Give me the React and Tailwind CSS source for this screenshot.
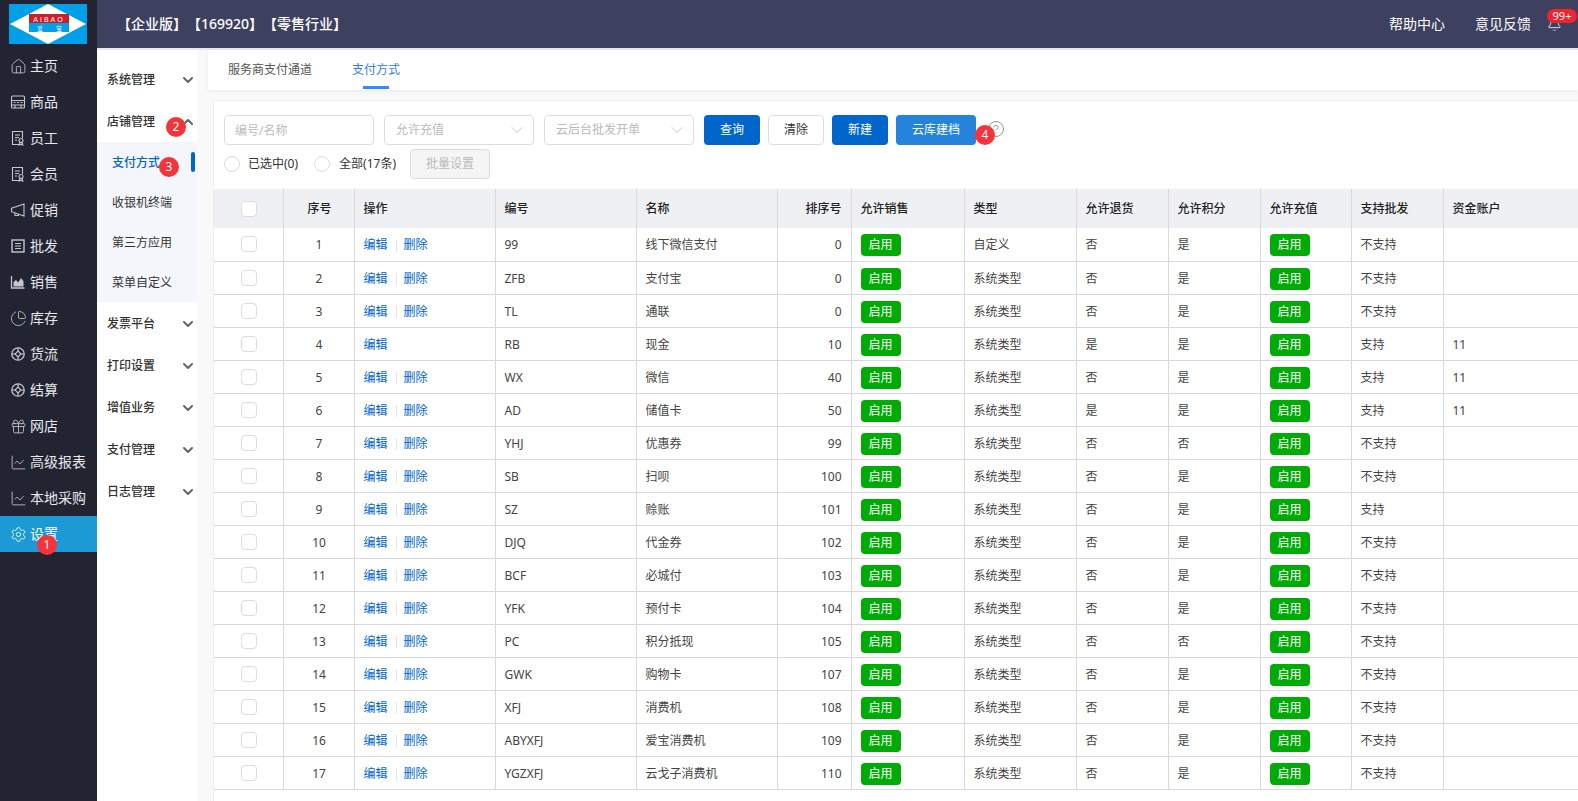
import { Bell, ChartLine, ChartPie, ChevronDown, ChevronUp, CircleHelp, Gift, House, Settings } from "lucide-react";

// icons the package has no close match for
function Svg({ children }) {
  return (
    <svg width="16" height="16" viewBox="0 0 16 16" fill="none" stroke="currentColor" strokeWidth="1.1">
      {children}
    </svg>
  );
}

const ShopIcon = () => (
  <Svg>
    <rect x="1.5" y="2" width="13" height="12" rx="1" />
    <path d="M1.5 6.5h13M1.5 11h13" />
    <path d="M3.5 8.5h2M7 8.5h2M10.5 8.5h2M5 11v3M11 11v3" />
  </Svg>
);
const DocIcon = () => (
  <Svg>
    <path d="M9 14.5H2.5v-13h10V8" />
    <path d="M5 5h5M5 7.5h4M5 10h2" />
    <circle cx="11" cy="10.5" r="2" />
    <path d="M9.8 12.5l-.6 2.5 1.8-.8 1.8.8-.6-2.5" />
  </Svg>
);
const HornIcon = () => (
  <Svg>
    <path d="M1.5 6.3L14 2v12L1.5 9.7z" />
    <path d="M5 11v2.5h3.5v-1.2" />
  </Svg>
);
const ListIcon = () => (
  <Svg>
    <rect x="2" y="2" width="12" height="12" strokeWidth="1.4" />
    <path d="M5 5.5h6M5 8h6M5 10.5h6" />
  </Svg>
);
const AreaIcon = () => (
  <Svg>
    <path d="M1.5 2v12h13" strokeWidth="1.3" />
    <path d="M3.5 12.5V8l2.5-2 2.2 2.5L11 4l2.5 3.2v5.3z" fill="currentColor" stroke="none" />
  </Svg>
);
const FlowIcon = () => (
  <Svg>
    <circle cx="8" cy="8" r="6.2" strokeWidth="1.3" />
    <path d="M8 5l3 3-3 3-3-3z" />
    <path d="M8 1.8V5M8 11v3.2M1.8 8H5M11 8h3.2" />
  </Svg>
);

const lucide = (Icon) => () => <Icon size={17} strokeWidth={1.2} className="shrink-0" />;

const navItems = [
  { label: "主页", icon: lucide(House) },
  { label: "商品", icon: ShopIcon },
  { label: "员工", icon: DocIcon },
  { label: "会员", icon: DocIcon },
  { label: "促销", icon: HornIcon },
  { label: "批发", icon: ListIcon },
  { label: "销售", icon: AreaIcon },
  { label: "库存", icon: lucide(ChartPie) },
  { label: "货流", icon: FlowIcon },
  { label: "结算", icon: FlowIcon },
  { label: "网店", icon: lucide(Gift) },
  { label: "高级报表", icon: lucide(ChartLine) },
  { label: "本地采购", icon: lucide(ChartLine) },
  { label: "设置", icon: lucide(Settings), active: true },
];

const subItems = ["支付方式", "收银机终端", "第三方应用", "菜单自定义"];
const lowerGroups = ["发票平台", "打印设置", "增值业务", "支付管理", "日志管理"];

// [code, name, sort, type, refund, points, wholesale, account, canDelete]
const rows = [
  ["99", "线下微信支付", 0, "自定义", "否", "是", "不支持", "", true],
  ["ZFB", "支付宝", 0, "系统类型", "否", "是", "不支持", "", true],
  ["TL", "通联", 0, "系统类型", "否", "是", "不支持", "", true],
  ["RB", "现金", 10, "系统类型", "是", "是", "支持", "11", false],
  ["WX", "微信", 40, "系统类型", "否", "是", "支持", "11", true],
  ["AD", "储值卡", 50, "系统类型", "是", "是", "支持", "11", true],
  ["YHJ", "优惠券", 99, "系统类型", "否", "否", "不支持", "", true],
  ["SB", "扫呗", 100, "系统类型", "否", "是", "不支持", "", true],
  ["SZ", "赊账", 101, "系统类型", "否", "是", "支持", "", true],
  ["DJQ", "代金券", 102, "系统类型", "否", "是", "不支持", "", true],
  ["BCF", "必城付", 103, "系统类型", "否", "是", "不支持", "", true],
  ["YFK", "预付卡", 104, "系统类型", "否", "是", "不支持", "", true],
  ["PC", "积分抵现", 105, "系统类型", "否", "否", "不支持", "", true],
  ["GWK", "购物卡", 107, "系统类型", "否", "是", "不支持", "", true],
  ["XFJ", "消费机", 108, "系统类型", "否", "是", "不支持", "", true],
  ["ABYXFJ", "爱宝消费机", 109, "系统类型", "否", "是", "不支持", "", true],
  ["YGZXFJ", "云戈子消费机", 110, "系统类型", "否", "是", "不支持", "", true],
];

function Badge({ n, className }) {
  return (
    <span
      className={`absolute z-10 flex h-5 w-5 items-center justify-center rounded-full bg-[#f5333a] text-xs font-normal text-white ${className}`}
    >
      {n}
    </span>
  );
}

function Logo() {
  return (
    <svg width="78" height="40" viewBox="0 0 78 40" className="block">
      <rect width="78" height="40" fill="#00a0e9" />
      <polygon points="1,20 39,0 77,20 39,40" fill="#fff" />
      <rect x="20" y="10" width="40" height="18" fill="#00a0e9" />
      <rect x="20" y="10" width="40" height="9" fill="#cc1f2a" />
      <text x="40" y="17.5" textAnchor="middle" fontSize="7" letterSpacing="2" fill="#fff" fontFamily="Liberation Sans">
        AIBAO
      </text>
      <text x="31" y="26.5" textAnchor="middle" fontSize="6" fill="#fff">爱</text>
      <text x="50" y="26.5" textAnchor="middle" fontSize="6" fill="#fff">宝</text>
    </svg>
  );
}

function Sidebar() {
  return (
    <aside className="flex w-[97px] shrink-0 flex-col bg-[#222431]">
      <div className="flex h-12 items-center justify-center pr-px">
        <Logo />
      </div>
      {navItems.map(({ label, icon: Icon, active }) => (
        <div
          key={label}
          className={`relative flex h-9 items-center gap-1 pl-[10px] text-sm whitespace-nowrap ${
            active ? "bg-[#1c9ad6] text-white" : "text-[#e6e8ee]"
          }`}
        >
          <span className={`flex h-4 w-4 items-center justify-center ${active ? "text-white" : "text-[#c4c6cf]"}`}>
            <Icon />
          </span>
          {label}
          {active && <Badge n="1" className="left-[37px] top-[19px]" />}
        </div>
      ))}
    </aside>
  );
}

function GroupTitle({ title, open, children }) {
  const Chevron = open ? ChevronUp : ChevronDown;
  return (
    <div className="relative flex h-[42px] items-center justify-between pl-[10px] pr-px pt-[2px] text-xs font-medium text-[#333]">
      {title}
      <Chevron size={16} strokeWidth={3} className="text-[#666]" />
      {children}
    </div>
  );
}

function SubNav() {
  return (
    <nav className="w-[100px] shrink-0 bg-white pt-[8px]">
      <GroupTitle title="系统管理" />
      <GroupTitle title="店铺管理" open>
        <Badge n="2" className="left-[69px] top-[17px]" />
      </GroupTitle>
      <div className="bg-[#f4f6fb]">
        {subItems.map((item, i) => (
          <div
            key={item}
            className={`relative flex h-10 items-center pl-[15px] pt-[2px] text-xs ${i === 0 ? "font-medium text-[#0066cc]" : "text-[#333]"}`}
          >
            {item}
            {i === 0 && (
              <>
                <span className="absolute right-[2px] top-[10px] h-5 w-1 rounded-sm bg-[#0066cc]" />
                <Badge n="3" className="left-[62px] top-[15px]" />
              </>
            )}
          </div>
        ))}
      </div>
      {lowerGroups.map((g) => (
        <GroupTitle key={g} title={g} />
      ))}
    </nav>
  );
}

function Select({ placeholder }) {
  return (
    <div className="flex h-[30px] w-[150px] items-center justify-between rounded border border-[#ddd] bg-white pl-[11px] pr-[6px] text-xs text-[#bbb]">
      {placeholder}
      <ChevronDown size={20} strokeWidth={1} className="text-[#bbb]" />
    </div>
  );
}

function Radio({ label, gap }) {
  return (
    <label className={`flex items-center text-xs text-[#333] ${gap}`}>
      <span className="h-4 w-4 rounded-full border border-[#ddd] bg-white" />
      {label}
    </label>
  );
}

function Toolbar() {
  return (
    <div className="px-[10px] pt-[14px]">
      <div className="flex items-center">
        <input
          placeholder="编号/名称"
          className="h-[30px] w-[150px] rounded border border-[#ddd] bg-white px-[10px] text-xs placeholder:text-[#bbb]"
        />
        <div className="ml-[10px]">
          <Select placeholder="允许充值" />
        </div>
        <div className="ml-[10px]">
          <Select placeholder="云后台批发开单" />
        </div>
        <button className="ml-[10px] h-[30px] w-14 rounded-sm bg-[#0066cc] text-xs text-white">查询</button>
        <button className="ml-2 h-[30px] w-14 rounded-sm border border-[#ddd] bg-white text-xs text-[#333]">清除</button>
        <button className="ml-2 h-[30px] w-14 rounded-sm bg-[#0066cc] text-xs text-white">新建</button>
        <button className="ml-2 h-[30px] w-20 rounded-sm bg-[#2484db] text-xs text-white">云库建档</button>
        <div className="relative ml-[11px] -mt-[2px]">
          <CircleHelp size={18} strokeWidth={1.2} className="text-[#888]" />
          <Badge n="4" className="-left-[12px] top-[5px]" />
        </div>
      </div>
      <div className="mt-1 flex items-center">
        <Radio label="已选中(0)" gap="gap-2" />
        <div className="ml-4">
          <Radio label="全部(17条)" gap="gap-[9px]" />
        </div>
        <button className="ml-[14px] h-[30px] w-20 rounded-sm border border-[#ddd] bg-[#f5f5f5] text-xs text-[#bbb]">
          批量设置
        </button>
      </div>
    </div>
  );
}

function Checkbox() {
  return <span className="mx-auto block h-4 w-4 rounded-sm border border-[#ddd] bg-white" />;
}

function Enabled() {
  return <span className="inline-block h-[22px] w-10 rounded-sm bg-[#00ab05] text-center text-xs leading-[22px] text-white">启用</span>;
}

const th = "border-r border-[#d9d9dc] px-[9px] text-left font-medium text-[#222]";
const td = "border-r border-b border-[#d9d9dc] px-[9px] pt-[2px] text-[#444]";

function PayTable() {
  return (
    <table className="mt-[10px] w-[1364px] table-fixed border-collapse text-xs">
      <colgroup>
        <col className="w-[69px]" />
        <col className="w-[71px]" />
        <col className="w-[141px]" />
        <col className="w-[141px]" />
        <col className="w-[141px]" />
        <col className="w-[74px]" />
        <col className="w-[113px]" />
        <col className="w-[112px]" />
        <col className="w-[92px]" />
        <col className="w-[92px]" />
        <col className="w-[91px]" />
        <col className="w-[92px]" />
        <col className="w-[135px]" />
      </colgroup>
      <thead>
        <tr className="h-[39px] bg-[#eff0f4]">
          <th className="border-r border-[#d9d9dc] pl-px"><Checkbox /></th>
          <th className="border-r border-[#d9d9dc] pl-[2px] font-medium text-[#222]">序号</th>
          <th className={th}>操作</th>
          <th className={th}>编号</th>
          <th className={th}>名称</th>
          <th className={`${th} text-right`}>排序号</th>
          <th className={th}>允许销售</th>
          <th className={th}>类型</th>
          <th className={th}>允许退货</th>
          <th className={th}>允许积分</th>
          <th className={th}>允许充值</th>
          <th className={th}>支持批发</th>
          <th className="px-[9px] text-left font-medium text-[#222]">资金账户</th>
        </tr>
      </thead>
      <tbody>
        {rows.map((r, i) => (
          <tr key={r[0]} className="h-[33px]">
            <td className="border-r border-b border-[#d9d9dc] pl-px"><Checkbox /></td>
            <td className={`${td} pl-[10px] text-center`}>{i + 1}</td>
            <td className={td}>
              <span className="text-[#0066cc]">编辑</span>
              {r[8] && (
                <>
                  <span className="ml-2 mr-[7px] inline-block h-3 w-px bg-[#e5e5e5] align-middle" />
                  <span className="text-[#0066cc]">删除</span>
                </>
              )}
            </td>
            <td className={td}>{r[0]}</td>
            <td className={td}>{r[1]}</td>
            <td className={`${td} text-right`}>{r[2]}</td>
            <td className={td}><Enabled /></td>
            <td className={td}>{r[3]}</td>
            <td className={td}>{r[4]}</td>
            <td className={td}>{r[5]}</td>
            <td className={td}><Enabled /></td>
            <td className={td}>{r[6]}</td>
            <td className={`${td} border-r-0`}>{r[7]}</td>
          </tr>
        ))}
      </tbody>
    </table>
  );
}

export default function App() {
  return (
    <div className="flex h-screen w-full overflow-hidden bg-white font-['Noto_Sans','Noto_Sans_CJK_SC',sans-serif]">
      <Sidebar />

      <div className="flex min-w-0 flex-1 flex-col">
        {/* Top bar */}
        <header className="flex h-[50px] shrink-0 items-center justify-between border-b-2 border-[#e8e8ec] bg-[#3e4060] pl-5 pr-[16px] text-sm text-white">
          <span className="font-medium [text-spacing-trim:space-all]">【企业版】【169920】【零售行业】</span>
          <div className="flex items-center">
            <span>帮助中心</span>
            <span className="ml-[30px]">意见反馈</span>
            <div className="relative ml-[16px]">
              <Bell size={15} strokeWidth={1.3} />
              <span className="absolute -right-[15px] -top-[8px] flex h-[14px] w-[30px] items-center justify-center rounded-full bg-[#f5222d] text-[11px] text-white">
                99+
              </span>
            </div>
          </div>
        </header>

        <div className="flex min-h-0 flex-1">
          <SubNav />

          <main className="min-w-0 flex-1 bg-[#f9f9fa] pl-[11px]">
            {/* Tabs */}
            <div className="flex h-10 items-stretch bg-white pl-[20px] text-xs shadow-[0_1px_4px_rgba(0,0,0,0.06)]">
              <div className="flex items-center text-[#555]">服务商支付通道</div>
              <div className="relative ml-10 flex items-center text-[#2f80e0]">
                支付方式
                <span className="absolute bottom-[1px] left-[11px] h-[3px] w-[26px] bg-[#2f8cff]" />
              </div>
            </div>

            {/* Card */}
            <div className="ml-[5px] mt-[10px] border-l border-t border-[#eee] bg-white pb-[30px]">
              <Toolbar />
              <PayTable />
            </div>
          </main>
        </div>
      </div>
    </div>
  );
}
